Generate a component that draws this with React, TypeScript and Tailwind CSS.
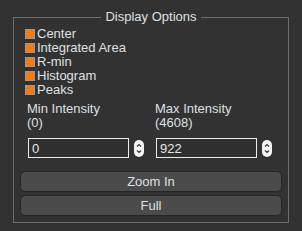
import { useState } from 'react'

const options = ['Center', 'Integrated Area', 'R-min', 'Histogram', 'Peaks']

function Spinner() {
  return (
    <div className="flex h-[17px] w-[10px] flex-col items-center justify-center rounded-[5px] bg-[#f4f4f4]">
      <svg width="6" height="13" viewBox="0 0 6 13" fill="none" stroke="#333" strokeWidth="1.1">
        <path d="M1 4.5 L3 2.5 L5 4.5" />
        <path d="M1 8.5 L3 10.5 L5 8.5" />
      </svg>
    </div>
  )
}

interface IntensityProps {
  label: string
  max: number
  value: string
  onChange: (v: string) => void
}

function Intensity({ label, max, value, onChange }: IntensityProps) {
  return (
    <div className="flex w-[128px] flex-col">
      <div className="leading-[14px]">{label}</div>
      <div className="leading-[14px]">({max})</div>
      <div className="mt-[8px] flex items-center gap-[5px] pl-[1px]">
        <input
          type="text"
          value={value}
          onChange={(e) => onChange(e.target.value)}
          className="h-[20px] w-[101px] border border-[#ececec] bg-[#2f2f2f] px-[3px] text-[13px] text-[#e6e6e6] outline-none"
        />
        <Spinner />
      </div>
    </div>
  )
}

export default function App() {
  const [min, setMin] = useState('0')
  const [max, setMax] = useState('922')

  return (
    <div
      className="h-[231px] w-[302px] bg-[#323232] pl-[13px] pt-[10px] text-[13px] text-[#dee0e4]"
      style={{ fontFamily: '"Liberation Sans", Arial, sans-serif' }}
    >
      <fieldset className="h-[213px] w-[276px] border border-[#6c6c6c]">
        <legend className="mx-auto px-[4px] text-[13px] leading-[14px]">Display Options</legend>
        <div className="flex flex-col pl-[11px] pt-[3px]">
          {options.map((o) => (
            <label key={o} className="flex h-[14px] items-center gap-[2px] leading-[14px]">
              <span className="h-[10px] w-[10px] border border-[#9a9a9a] bg-[#f47a14]" />
              {o}
            </label>
          ))}
        </div>
        <div className="mt-[5px] flex pl-[13px]">
          <Intensity label="Min Intensity" max={0} value={min} onChange={setMin} />
          <Intensity label="Max Intensity" max={4608} value={max} onChange={setMax} />
        </div>
        <div className="mt-[13px] flex flex-col gap-[3px] px-[6px]">
          <button className="h-[21px] rounded-[5px] border border-[#252525] bg-[#4b4b4b] text-[13px] text-[#dee0e4]">
            Zoom In
          </button>
          <button className="h-[21px] rounded-[5px] border border-[#252525] bg-[#4b4b4b] text-[13px] text-[#dee0e4]">
            Full
          </button>
        </div>
      </fieldset>
    </div>
  )
}
